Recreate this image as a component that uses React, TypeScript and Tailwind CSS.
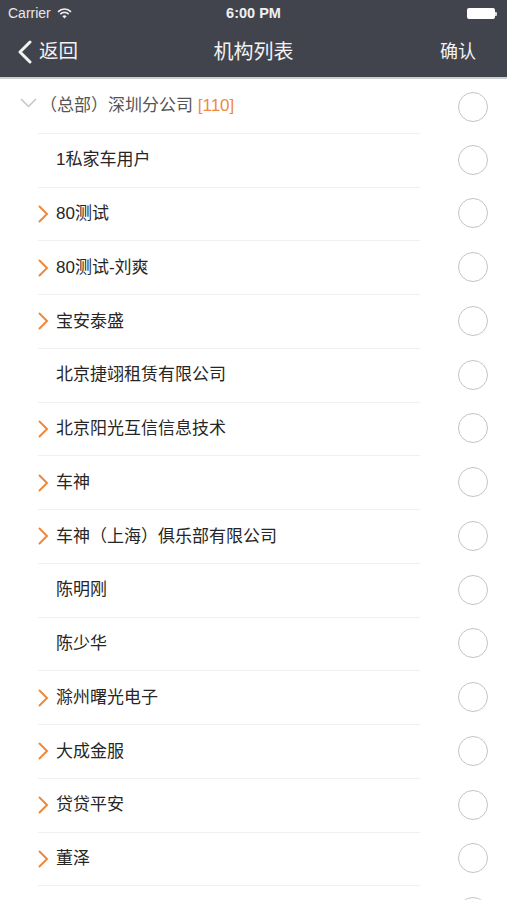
import React from "react";

const rows: { name: string; arrow: boolean }[] = [
  { name: "1私家车用户", arrow: false },
  { name: "80测试", arrow: true },
  { name: "80测试-刘爽", arrow: true },
  { name: "宝安泰盛", arrow: true },
  { name: "北京捷翊租赁有限公司", arrow: false },
  { name: "北京阳光互信信息技术", arrow: true },
  { name: "车神", arrow: true },
  { name: "车神（上海）俱乐部有限公司", arrow: true },
  { name: "陈明刚", arrow: false },
  { name: "陈少华", arrow: false },
  { name: "滁州曙光电子", arrow: true },
  { name: "大成金服", arrow: true },
  { name: "贷贷平安", arrow: true },
  { name: "董泽", arrow: true },
  { name: "", arrow: false },
];

const font = { fontFamily: '"Helvetica Neue", "Liberation Sans", "Noto Sans CJK SC", sans-serif' };

function Circle() {
  return <div className="w-[30px] h-[30px] rounded-full border-[1.5px] border-[#c4c4c4] shrink-0" />;
}

export default function App() {
  return (
    <div className="w-[507px] h-[900px] overflow-hidden bg-white" style={font}>
      {/* status bar */}
      <div className="h-[27px] bg-[#42444d] flex items-center justify-between px-[8px] text-white relative">
        <div className="flex items-center gap-[6px] text-[14px] text-[#e8e8e8]">
          <span>Carrier</span>
          <svg width="15" height="11" viewBox="0 0 15 11">
            <path d="M1 3.8 A9 9 0 0 1 14 3.8" stroke="#eee" strokeWidth="1.7" fill="none" />
            <path d="M3.3 6.1 A6 6 0 0 1 11.7 6.1" stroke="#eee" strokeWidth="1.7" fill="none" />
            <path d="M7.5 10.5 L5.4 8.3 A3 3 0 0 1 9.6 8.3 Z" fill="#eee" />
          </svg>
        </div>
        <div className="absolute left-0 right-0 text-center text-[14.5px] font-semibold text-[#f0f0f0] pointer-events-none">6:00 PM</div>
        <div className="flex items-center mr-[2px]">
          <div className="w-[28px] h-[11px] bg-white rounded-[2px]" />
          <div className="w-[2px] h-[4px] bg-[#ddd] rounded-r-[1px]" />
        </div>
      </div>
      {/* nav bar */}
      <div className="h-[50px] bg-[#42444d] flex items-center relative text-[#f2f2f2]">
        <div className="flex items-center pl-[16px]">
          <svg width="17" height="24" viewBox="0 0 17 24">
            <path d="M14 2 L4 12 L14 22" stroke="#f2f2f2" strokeWidth="3" fill="none" strokeLinecap="round" strokeLinejoin="round" />
          </svg>
          <span className="ml-[6px] text-[19.5px]">返回</span>
        </div>
        <div className="absolute left-0 right-0 text-center text-[20px] pointer-events-none">机构列表</div>
        <div className="ml-auto pr-[31px] text-[18px]">确认</div>
      </div>
      <div className="h-[2px] bg-[#cfcfd2]" />
      {/* list */}
      <div className="flex flex-col">
        <div className="h-[53.75px] flex items-center">
          <div className="flex-1 flex items-center pl-[20px] self-stretch">
            <svg width="17" height="10" viewBox="0 0 17 10" className="mb-[6px]">
              <path d="M1 1 L8.5 8.5 L16 1" stroke="#c4c4c4" strokeWidth="1.5" fill="none" />
            </svg>
            <span className="ml-[3px] text-[17px] text-[#555]">（总部）深圳分公司 <span className="text-[#f08a3c]">[110]</span></span>
          </div>
          <div className="mr-[19px] mt-[2px]"><Circle /></div>
        </div>
        {rows.map((r, i) => (
          <div key={i} className="h-[53.75px] flex items-center">
            <div className="w-[382px] ml-[38px] self-stretch flex items-center border-t border-[#f0f0f0]">
              <div className="w-[18px] flex items-center">
                {r.arrow && (
                  <svg width="11" height="18" viewBox="0 0 11 18">
                    <path d="M1.5 1.5 L9 9 L1.5 16.5" stroke="#f0883a" strokeWidth="2" fill="none" strokeLinecap="round" />
                  </svg>
                )}
              </div>
              {r.name && <span className="text-[17px] text-[#262626]">{r.name}</span>}
            </div>
            <div className="ml-auto mr-[19px]"><Circle /></div>
          </div>
        ))}
      </div>
    </div>
  );
}
